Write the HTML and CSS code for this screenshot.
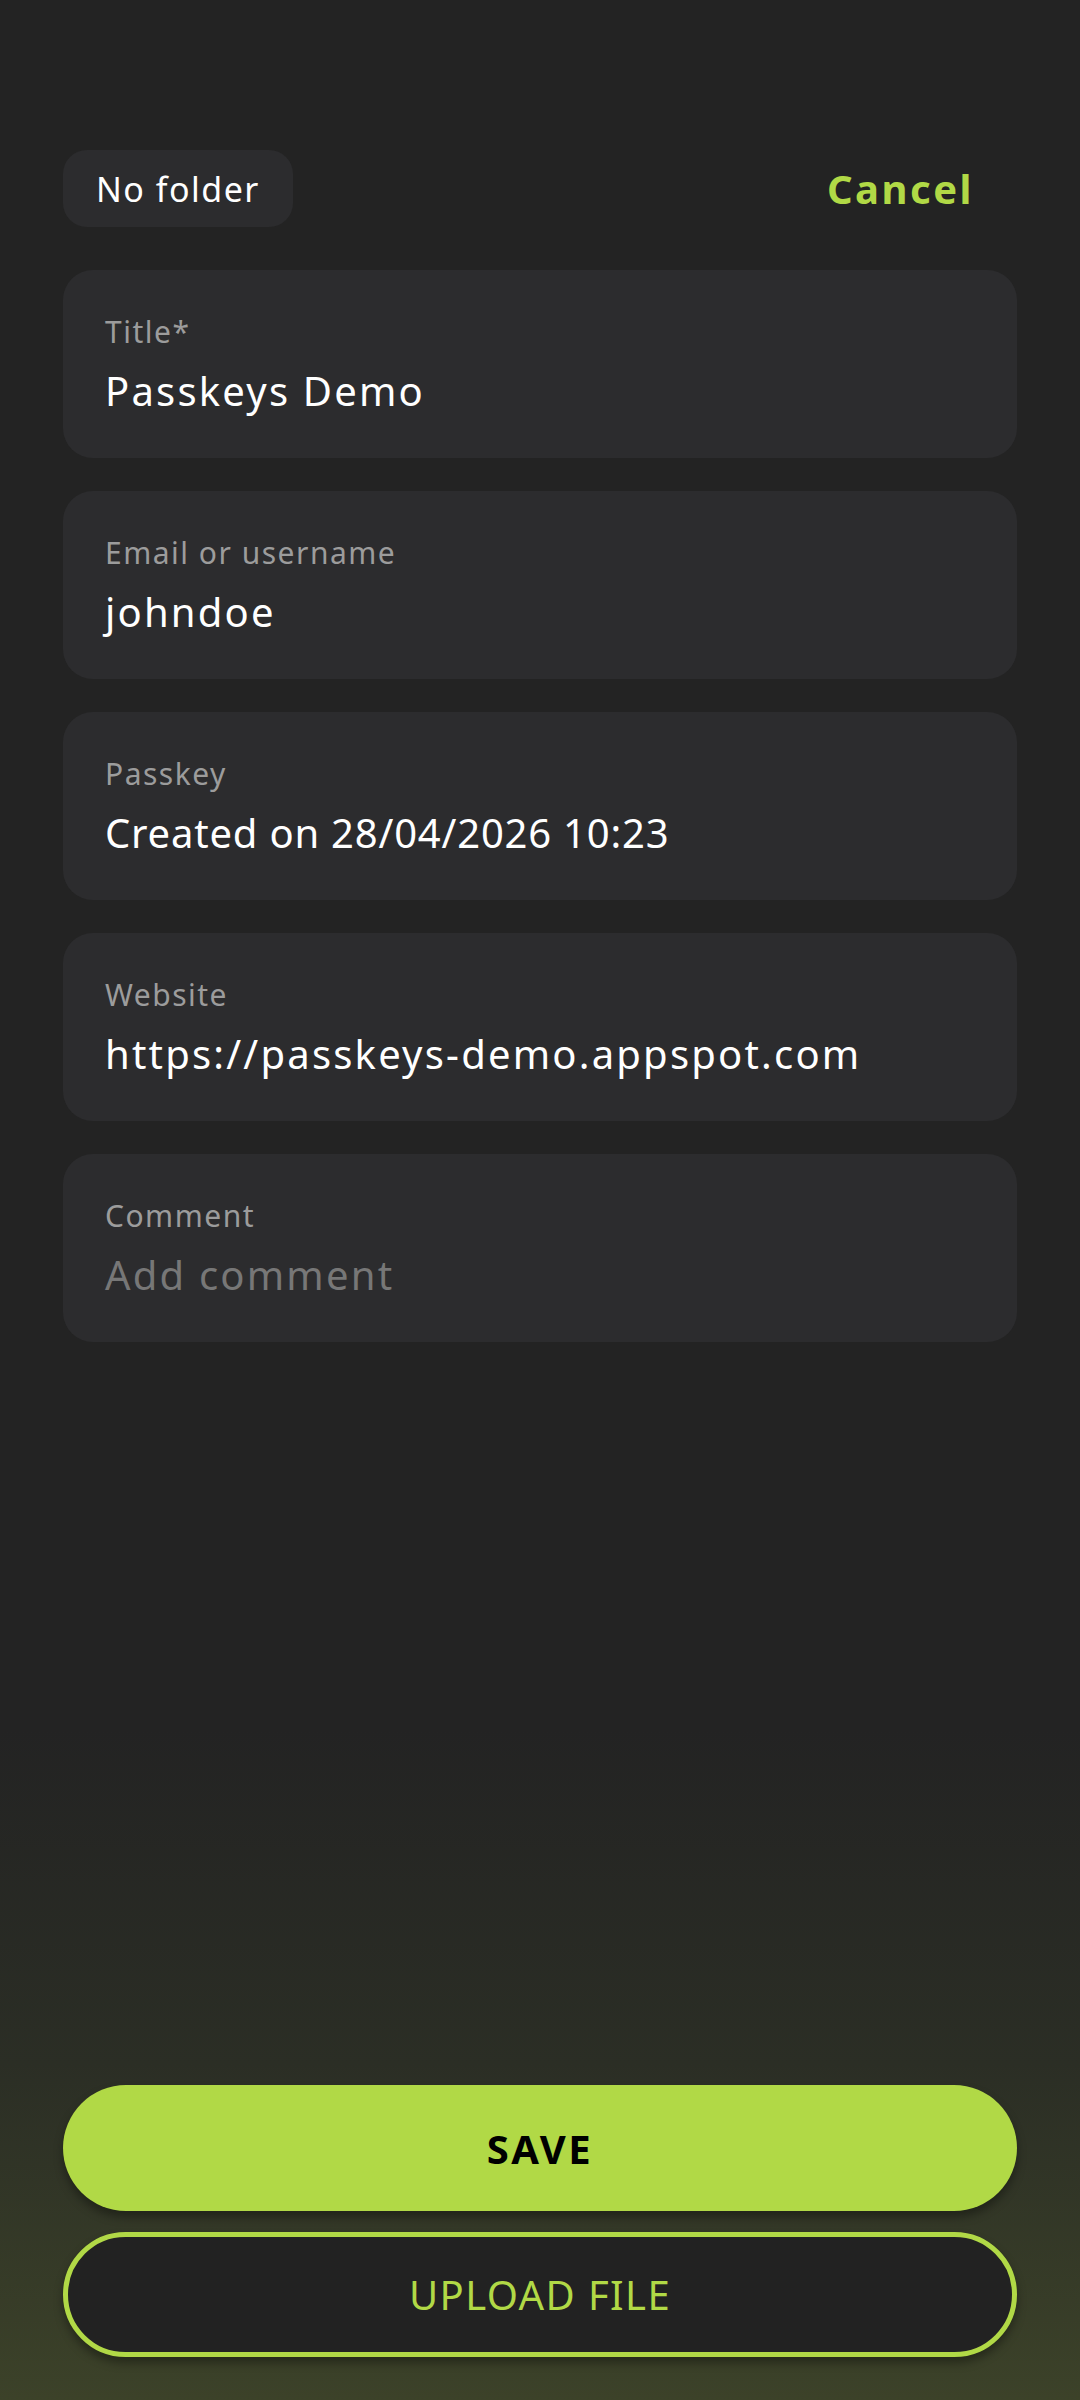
FILE: index.html
```html
<!DOCTYPE html>
<html lang="en">
<head>
    <meta charset="UTF-8">
    <meta name="viewport" content="width=device-width, initial-scale=1.0">
    <title>Edit passkey</title>
    <link rel="stylesheet" href="styles.css">
</head>
<body>
    <div class="screen">
        <div class="top-bar">
            <button class="folder-chip">No folder</button>
            <button class="cancel-btn">Cancel</button>
        </div>

        <div class="fields">
            <div class="field">
                <p class="field-label">Title*</p>
                <p class="field-value">Passkeys Demo</p>
            </div>
            <div class="field">
                <p class="field-label">Email or username</p>
                <p class="field-value">johndoe</p>
            </div>
            <div class="field">
                <p class="field-label">Passkey</p>
                <p class="field-value date">Created on 28/04/2026 10:23</p>
            </div>
            <div class="field">
                <p class="field-label">Website</p>
                <p class="field-value">https://passkeys-demo.appspot.com</p>
            </div>
            <div class="field">
                <p class="field-label">Comment</p>
                <p class="field-value placeholder">Add comment</p>
            </div>
        </div>

        <div class="actions">
            <button class="save-btn">SAVE</button>
            <button class="upload-btn">UPLOAD FILE</button>
        </div>
    </div>
</body>
</html>
```

FILE: styles.css
```css
body{
    margin: 0;
    padding: 0;
    font-family: "Noto Sans", "Open Sans", sans-serif;
    color: #ffffff;
}
.screen{
    box-sizing: border-box;
    height: 2400px;
    padding: 150px 63px 43px;
    display: flex;
    flex-direction: column;
    background: linear-gradient(to bottom, #232323 0%, #232323 72%, #2b2e25 86%, #3c4229 100%);
}
button{
    font-family: inherit;
    border: none;
    cursor: pointer;
}
.top-bar{
    display: flex;
    justify-content: space-between;
    align-items: center;
    height: 77px;
}
.folder-chip{
    height: 77px;
    padding: 0 33px;
    border-radius: 24px;
    background-color: #2c2c2e;
    color: #ffffff;
    font-size: 34px;
    letter-spacing: 1.5px;
}
.cancel-btn{
    background: none;
    color: #b1d946;
    font-size: 40px;
    font-weight: 700;
    letter-spacing: 2.5px;
    padding: 0 43px 0 0;
}
.fields{
    display: flex;
    flex-direction: column;
    gap: 33px;
    margin-top: 43px;
}
.field{
    box-sizing: border-box;
    height: 188px;
    background-color: #2c2c2e;
    border-radius: 30px;
    padding: 42px 42px 0;
}
.field-label{
    margin: 0;
    font-size: 30px;
    line-height: 40px;
    letter-spacing: 1.5px;
    color: #9c9c9c;
}
.field-value{
    margin: 12px 0 0;
    font-size: 40px;
    line-height: 54px;
    letter-spacing: 2.2px;
    color: #ffffff;
}
.field-value.date{
    letter-spacing: 0.8px;
}
.placeholder{
    color: #777777;
}
.actions{
    margin-top: auto;
    display: flex;
    flex-direction: column;
    gap: 21px;
}
.save-btn{
    height: 126px;
    border-radius: 63px;
    background-color: #b1d946;
    color: #000000;
    font-size: 40px;
    font-weight: 700;
    letter-spacing: 2.5px;
    box-shadow: 0 6px 10px rgba(0, 0, 0, 0.35);
}
.upload-btn{
    box-sizing: border-box;
    height: 125px;
    border-radius: 63px;
    border: 5px solid #b1d946;
    background-color: #222222;
    color: #b1d946;
    font-size: 40px;
    letter-spacing: 1.4px;
    box-shadow: 0 6px 10px rgba(0, 0, 0, 0.35);
}
```
